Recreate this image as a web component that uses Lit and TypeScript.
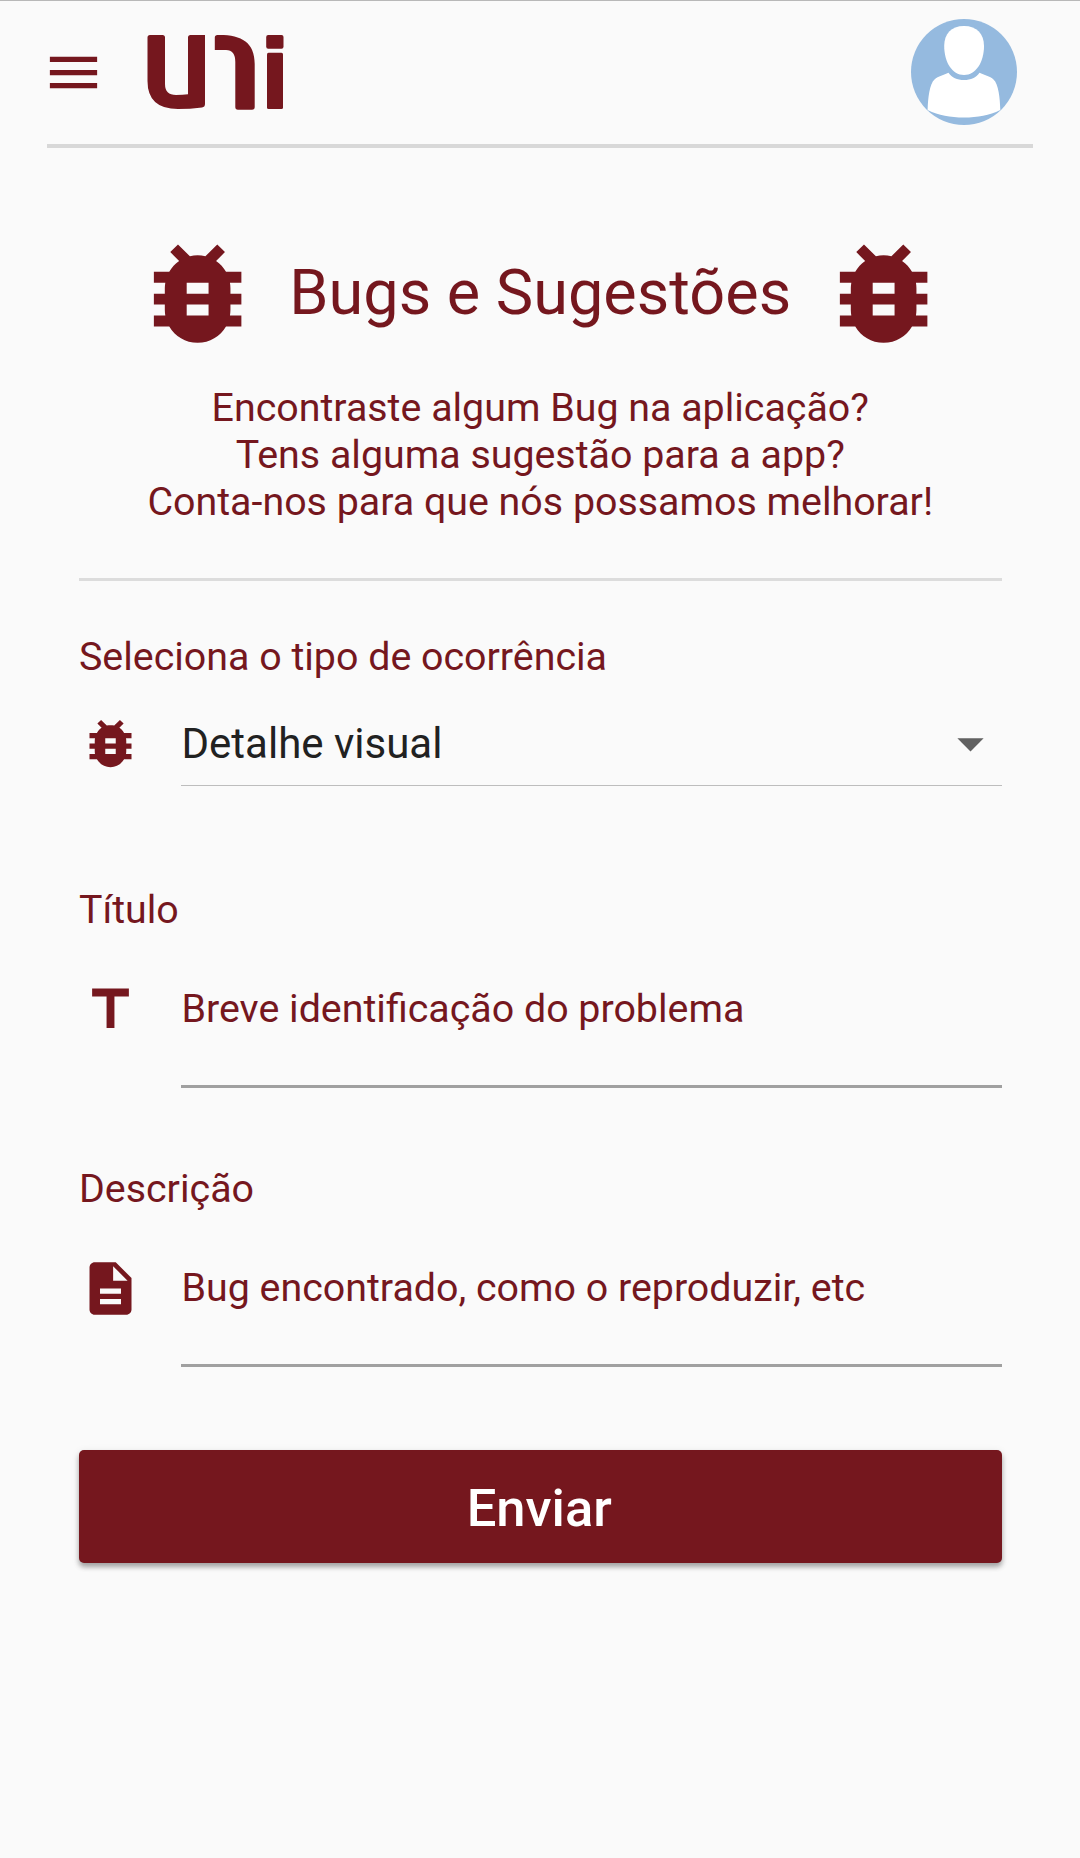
import { LitElement, html, css, svg } from "lit";
import { customElement, property } from "lit/decorators.js";

const ICONS: Record<string, string> = {
  menu: "M3 18h18v-2H3v2zm0-5h18v-2H3v2zm0-7v2h18V6H3z",
  bug: "M20 8h-2.81c-.45-.78-1.07-1.45-1.82-1.96L17 4.41 15.59 3l-2.17 2.17C12.96 5.06 12.49 5 12 5c-.49 0-.96.06-1.41.17L8.41 3 7 4.41l1.62 1.63C7.88 6.55 7.26 7.22 6.81 8H4v2h2.09c-.05.33-.09.66-.09 1v1H4v2h2v1c0 .34.04.67.09 1H4v2h2.81c1.04 1.79 2.97 3 5.19 3s4.15-1.21 5.19-3H20v-2h-2.09c.05-.33.09-.66.09-1v-1h2v-2h-2v-1c0-.34-.04-.67-.09-1H20V8zm-6 8h-4v-2h4v2zm0-4h-4v-2h4v2z",
  title: "M5 4v3h5.5v12h3V7H19V4z",
  description: "M14 2H6c-1.1 0-1.99.9-1.99 2L4 20c0 1.1.89 2 1.99 2H18c1.1 0 2-.9 2-2V8l-6-6zm2 16H8v-2h8v2zm0-4H8v-2h8v2zm-3-5V3.5L18.5 9H13z",
  dropdown: "M7 10l5 5 5-5z",
};

@customElement("uni-icon")
export class UniIcon extends LitElement {
  static styles = css`
    :host { display: block; flex: none; width: 63px; height: 63px; }
    .glyph { display: block; width: 100%; height: 100%; fill: currentColor; }
  `;
  @property() name = "bug";
  render() {
    return html`<svg class="glyph" viewBox="0 0 24 24">${svg`<path d=${ICONS[this.name]}></path>`}</svg>`;
  }
}

@customElement("form-field")
export class FormField extends LitElement {
  static styles = css`
    :host { display: block; height: 279px; }
    .label { height: 47px; line-height: 47px; white-space: nowrap; }
    .row { display: flex; margin-top: 44.5px; }
    .line {
      flex: 1;
      margin-left: 39px;
      padding: 7.5px 0 52.5px 0.5px;
      border-bottom: 3px solid #a0a0a0;
      line-height: 47px;
      white-space: nowrap;
    }
  `;
  @property() label = "";
  @property() icon = "";
  @property() hint = "";
  render() {
    return html`
      <div class="label">${this.label}</div>
      <div class="row">
        <uni-icon name=${this.icon}></uni-icon>
        <div class="line">${this.hint}</div>
      </div>
    `;
  }
}

@customElement("app-root")
export class AppRoot extends LitElement {
  static styles = css`
    :host {
      display: block;
      box-sizing: border-box;
      height: 1858px;
      overflow: hidden;
      background: #fafafa;
      border-top: 1px solid #b8b8b8;
      color: #75171e;
      font-family: Roboto, sans-serif;
      font-size: 39.375px;
    }
    .header {
      display: flex;
      align-items: flex-start;
      box-sizing: border-box;
      height: 147px;
      margin: 0 47px;
      border-bottom: 4px solid #d8d8d8;
    }
    .menu { margin: 40px 0 0 -5px; }
    .logo { display: block; margin: 33px 0 0 41px; fill: currentColor; }
    .avatar { display: block; margin: 18px 16px 0 auto; }
    .page { padding: 79.5px 78.5px 0 79px; }
    .hero { display: flex; justify-content: center; align-items: center; height: 131.5px; }
    .hero-icon { width: 131.25px; height: 131.25px; }
    .hero-title {
      width: 555px;
      text-align: center;
      font-size: 63px;
      font-weight: 400;
      line-height: 74px;
      white-space: nowrap;
      margin: 0;
    }
    .intro { margin: 25px 0 0; text-align: center; line-height: 47px; white-space: nowrap; }
    .rule { height: 3px; margin-top: 53px; background: #dcdcdc; }
    .label { margin-top: 52px; height: 47px; line-height: 47px; }
    .select { display: flex; margin: 32px 0 100px; height: 74px; }
    .select-line {
      flex: 1;
      display: flex;
      box-sizing: border-box;
      margin-left: 39px;
      padding-left: 0.5px;
      border-bottom: 1px solid #bdbdbd;
      color: #212121;
      font-size: 42px;
      line-height: 63px;
      white-space: nowrap;
    }
    .arrow { margin-left: auto; color: #616161; }
    .send {
      display: flex;
      align-items: center;
      justify-content: center;
      width: 100%;
      height: 113px;
      margin-top: 6px;
      padding: 2px 2px 0 0;
      border: 0;
      border-radius: 5px;
      background: #75171e;
      box-shadow: 0 4px 5px rgba(0, 0, 0, 0.3), 0 2px 9px rgba(0, 0, 0, 0.1);
      color: #fff;
      font: 500 52.5px/62px Roboto, sans-serif;
    }
  `;

  private logo() {
    return html`<svg class="logo" width="139" height="78" viewBox="146 34 139 78">
      <path d="M150 35H162.500Q165 35 165 37.500V84Q165 95 176 95Q183 95 188 94.300V37.500Q188 35 190.500 35H205V104Q205 107 202 107.500Q190 109 178 109Q147.500 109 147.500 81V37.500Q147.500 35 150 35Z"></path>
      <path d="M217.500 35C241 34.500 254.700 42 254.700 64V107Q254.700 109.700 252 109.700H238Q235.300 109.700 235.300 107V62Q235.300 50 226 50H214.800V37.500Q214.800 35 217.500 35Z"></path>
      <rect x="266.200" y="35" width="17.300" height="13.700" rx="2"></rect>
      <rect x="267" y="52.800" width="16" height="56.200" rx="1.500"></rect>
    </svg>`;
  }

  private avatar() {
    return html`<svg class="avatar" width="106" height="106" viewBox="0 0 106 106">
      <circle cx="53" cy="53" r="53" fill="#95badf"></circle>
      <path fill="#fff" d="M53 7C66 7 73 15 73 27C73 43 65 56 53 56C41 56 33.200 43 33.200 27C33.200 15 40 7 53 7Z"></path>
      <path fill="#fff" d="M37.500 53.700C41 58.500 46 61 53 61C60 61 65 58.500 68.500 53.700C73 56 79 57 82.500 60.500C87.500 65 89 79 89.300 91C78 96.500 67 98.500 53 98.500C39 98.500 28 96.500 16.600 91C17 79 18.500 65 23.500 60.500C27 57 33 56 37.500 53.700Z"></path>
    </svg>`;
  }

  render() {
    return html`
      <header class="header">
        <uni-icon class="menu" name="menu"></uni-icon>
        ${this.logo()}
        ${this.avatar()}
      </header>
      <main class="page">
        <div class="hero">
          <uni-icon class="hero-icon" name="bug"></uni-icon>
          <h1 class="hero-title">Bugs e Sugestões</h1>
          <uni-icon class="hero-icon" name="bug"></uni-icon>
        </div>
        <p class="intro">
          Encontraste algum Bug na aplicação?<br />Tens alguma sugestão para a app?<br />Conta-nos para que nós possamos melhorar!
        </p>
        <div class="rule"></div>
        <div class="label">Seleciona o tipo de ocorrência</div>
        <div class="select">
          <uni-icon name="bug"></uni-icon>
          <div class="select-line">
            <span>Detalhe visual</span>
            <uni-icon class="arrow" name="dropdown"></uni-icon>
          </div>
        </div>
        <form-field label="Título" icon="title" hint="Breve identificação do problema"></form-field>
        <form-field label="Descrição" icon="description" hint="Bug encontrado, como o reproduzir, etc"></form-field>
        <button class="send">Enviar</button>
      </main>
    `;
  }
}
